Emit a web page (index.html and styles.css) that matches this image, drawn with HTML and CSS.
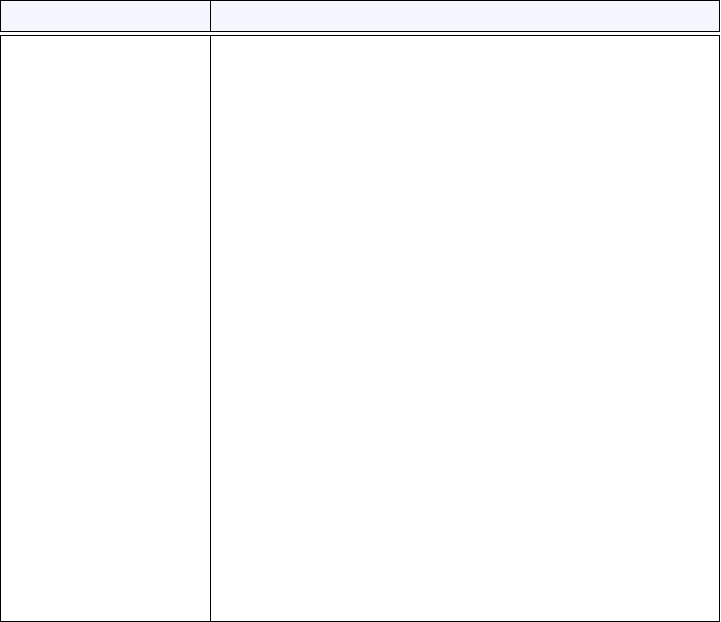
FILE: index.html
```html
<!DOCTYPE html>
<html lang="en">
<head>
    <meta charset="UTF-8">
    <title>Table</title>
    <link rel="stylesheet" href="styles.css">
</head>
<body>
<div class="grid_wrap">
    <div class="grid_head">
        <div class="cell cell_left"></div>
        <div class="cell"></div>
    </div>
    <div class="grid_body">
        <div class="cell cell_left"></div>
        <div class="cell"></div>
    </div>
</div>
</body>
</html>
```
FILE: styles.css
```css
html, body {
    margin: 0;
    padding: 0;
    background-color: #ffffff;
    font-family: "Liberation Sans", Arial, sans-serif;
}

.grid_wrap {
    width: 720px;
    display: flex;
    flex-direction: column;
    gap: 3px;
}

.grid_head {
    box-sizing: border-box;
    height: 32px;
    border: 1px solid #000000;
    background-color: #f5f6fe;
    display: grid;
    grid-template-columns: 210px 1fr;
}

.grid_body {
    box-sizing: border-box;
    height: 587px;
    border: 1px solid #000000;
    background-color: #ffffff;
    display: grid;
    grid-template-columns: 210px 1fr;
}

.cell_left {
    border-right: 1px solid #000000;
}
```
